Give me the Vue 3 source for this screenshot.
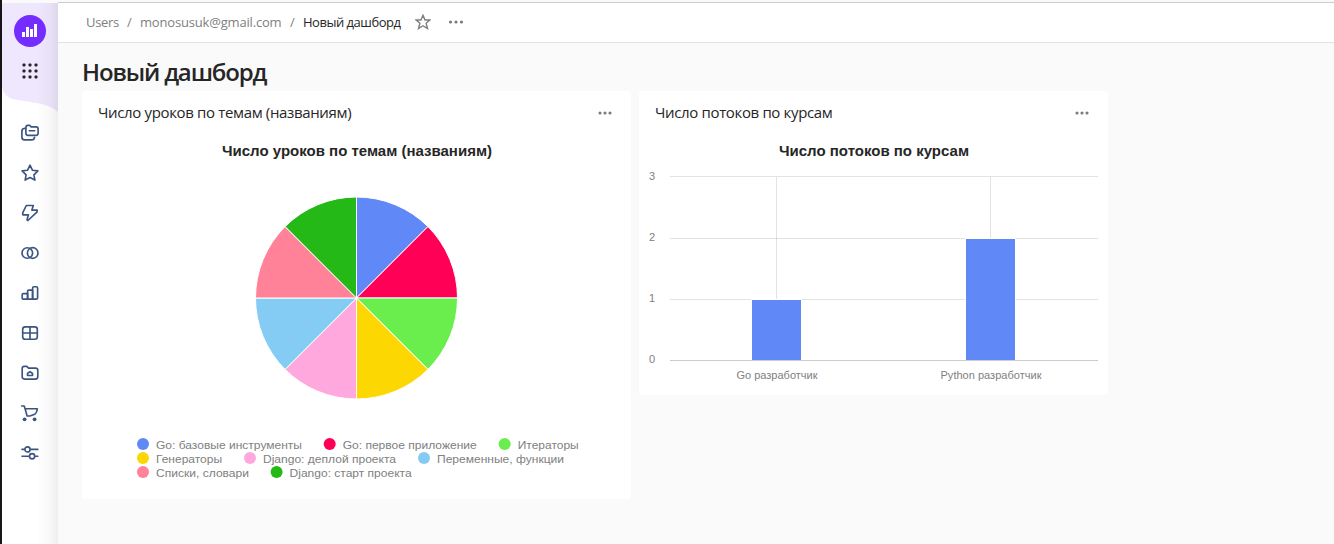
<script setup>
const icons = [
  { name: 'collections', d: ['M4.9 3.5Q4.9 1.3 6.8 1.3H8.6L10.1 2.900H15.2Q17.1 2.900 17.1 4.800V9.300Q17.1 11.300 15.2 11.300H6.900Q4.900 11.300 4.900 9.300Z', 'M4.700 4.300H3.600Q.900 4.600.900 7.200V13Q.900 15.900 3.500 15.900H10.700Q13.200 15.900 13.500 13.300', 'M8.300 6.700H13.700'] },
  { name: 'favorites', d: ['M9 1.200 11.400 6.200 16.900 6.900 12.900 10.800 13.900 16.100 9 13.600 4.100 16.100 5.100 10.800 1.100 6.900 6.600 6.200Z'] },
  { name: 'connections', d: ['M5.300 1.500H12.300L10.900 6.100H16.200L15.900 8.100 6.900 16.500 6 15.900 7.400 10.800H1.800L1.700 8.900Z'] },
  { name: 'datasets', d: ['M11.600 9A5.300 5.300 0 1 1 1 9A5.300 5.300 0 1 1 11.600 9Z', 'M17 9A5.300 5.300 0 1 1 6.400 9A5.300 5.300 0 1 1 17 9Z'] },
  { name: 'charts', d: ['M6.600 15.100H2.200Q1.200 15.100 1.200 14.100V10.600Q1.200 9.600 2.200 9.600H6.600Z', 'M6.600 15.100V7.300Q6.600 6.100 7.800 6.100H11.600V15.100Z', 'M11.600 15.100V4.100Q11.600 2.700 13 2.700H15.200Q16.600 2.700 16.600 4.100V13.700Q16.600 15.100 15.200 15.100Z'] },
  { name: 'dashboards', d: ['M4.200 2.800H13.800Q16.300 2.800 16.300 5.300V12.700Q16.300 15.200 13.800 15.200H4.200Q1.700 15.200 1.700 12.700V5.300Q1.700 2.800 4.200 2.800Z', 'M9 2.800V15.200M1.700 9H16.300'] },
  { name: 'folder', d: ['M1.200 4.300Q1.200 2.300 3.200 2.300H5.800L7.600 4.100H14.500Q16.800 4.100 16.800 6.400V12.500Q16.800 15.100 14.500 15.100H3.500Q1.200 15.100 1.200 12.800Z', 'M6.500 11.500V9.500L9 7.600 11.500 9.500V11.500Z'] },
  { name: 'marketplace', d: ['M.700 2H3.200L4.100 4.700 6.100 12H8.900L13.800 10.300Q16.200 8.200 16.300 4.700H4.300'], dots: [[3.6, 15.3], [13.6, 15.3]] },
  { name: 'settings', d: ['M1 5.400H3.900M9.100 5.400H16.800M9.100 5.400A2.600 2.600 0 1 1 3.900 5.400A2.600 2.600 0 1 1 9.100 5.400Z', 'M1 12.200H8.400M13.800 12.200H16.800M13.700 12.200A2.600 2.600 0 1 1 8.500 12.200A2.600 2.600 0 1 1 13.700 12.200Z'] }
]

const colors = ['#6188f7', '#ff0056', '#6aee4d', '#fcd702', '#ffa8dd', '#84ccf3', '#ff8299', '#24b916']
const slices = colors.map((color, i) => {
  const point = k => {
    const a = (k * Math.PI) / 4
    return `${274.5 + 101 * Math.sin(a)} ${165 - 101 * Math.cos(a)}`
  }
  return { color, d: `M274.5 165L${point(i)}A101 101 0 0 1 ${point(i + 1)}Z` }
})
const legend = [
  ['Go: базовые инструменты', 55, 0, 146],
  ['Go: первое приложение', 241.7, 0, 134],
  ['Итераторы', 416.7, 0, 61],
  ['Генераторы', 55, 1, 66],
  ['Django: деплой проекта', 162, 1, 133],
  ['Переменные, функции', 336, 1, 127],
  ['Списки, словари', 55, 2, 93],
  ['Django: старт проекта', 188.6, 2, 122]
].map(([text, x, row, width], i) => ({ text, x, y: 311 + row * 14, width, color: colors[i] }))
</script>

<template>
  <div class="window">
    <aside class="sidebar">
      <svg class="curve" width="56" height="112" viewBox="0 0 56 112">
        <path d="M0 0H56V109Q48 102 34 100L13 96.500Q0 94 0 81Z" fill="#eee7fd" />
      </svg>
      <div class="shade"></div>
      <div class="logo">
        <svg width="32" height="32" viewBox="0 0 32 32" fill="#fff">
          <rect x="8" y="17" width="3" height="5" /><rect x="12" y="12" width="3" height="10" />
          <rect x="16" y="14" width="3" height="8" /><rect x="20" y="9" width="3" height="13" />
        </svg>
      </div>
      <svg class="apps" width="18" height="18" viewBox="0 0 18 18" fill="#262226">
        <template v-for="r in 3" :key="r">
          <rect v-for="c in 3" :key="c" :x="c * 6 - 4.500" :y="r * 6 - 4.500" width="3" height="3" rx="1" />
        </template>
      </svg>
      <nav class="menu">
        <svg v-for="icon in icons" :key="icon.name" width="18" height="18" viewBox="0 0 18 18">
          <path v-for="d in icon.d" :key="d" :d="d" />
          <circle v-for="p in icon.dots" :key="p[0]" class="dot" :cx="p[0]" :cy="p[1]" r="1.900" />
        </svg>
      </nav>
    </aside>

    <main class="main">
      <header class="header">
        <span class="crumb users">Users</span><span class="crumb slash">/</span>
        <span class="crumb mail">monosusuk@gmail.com</span><span class="crumb slash">/</span>
        <span class="crumb current">Новый дашборд</span>
        <svg class="star" width="16" height="16" viewBox="0 0 16 16">
          <path d="M8 1.300 10 6H15L11.100 9.200 12.500 14.500 8 11.700 3.500 14.500 4.900 9.200 1 6H6Z" fill="none" stroke="#7f7f7f" stroke-width="1.400" />
        </svg>
        <svg class="more" width="16" height="4" viewBox="0 0 16 4" fill="#7b7b7b">
          <circle cx="2.500" cy="2" r="1.600" /><circle cx="8" cy="2" r="1.600" /><circle cx="13.500" cy="2" r="1.600" />
        </svg>
      </header>

      <h1 class="title">Новый дашборд</h1>

      <div class="cards">
        <section class="card lessons">
          <div class="card-head">
            <span class="name">Число уроков по темам (названиям)</span>
            <svg width="14" height="4" viewBox="0 0 14 4" fill="#7b7b7b">
              <circle cx="2" cy="2" r="1.550" /><circle cx="7" cy="2" r="1.550" /><circle cx="12" cy="2" r="1.550" />
            </svg>
          </div>
          <svg class="chart" width="549" height="366" viewBox="0 0 549 366">
            <text class="chart-title" x="140" y="23" textLength="270">Число уроков по темам (названиям)</text>
            <path v-for="s in slices" :key="s.color" :d="s.d" :fill="s.color" stroke="#fff" stroke-width="1" stroke-linejoin="round" />
            <g v-for="l in legend" :key="l.text">
              <circle :cx="l.x + 6" :cy="l.y" r="6" :fill="l.color" />
              <text class="legend-text" :x="l.x + 19" :y="l.y + 5" :textLength="l.width" lengthAdjust="spacingAndGlyphs">{{ l.text }}</text>
            </g>
          </svg>
        </section>

        <section class="card streams">
          <div class="card-head">
            <span class="name">Число потоков по курсам</span>
            <svg width="14" height="4" viewBox="0 0 14 4" fill="#7b7b7b">
              <circle cx="2" cy="2" r="1.550" /><circle cx="7" cy="2" r="1.550" /><circle cx="12" cy="2" r="1.550" />
            </svg>
          </div>
          <svg class="chart" width="469" height="262" viewBox="0 0 469 262">
            <text class="chart-title" x="140" y="23" textLength="190">Число потоков по курсам</text>
            <g stroke="#000" stroke-opacity=".11">
              <path d="M31 43.500H459M31 105.500H459M31 166.500H459" />
              <path d="M137.500 44V227M351.500 44V227" />
            </g>
            <rect x="112.500" y="166.500" width="50" height="61" fill="#6188f7" stroke="#fff" />
            <rect x="326.500" y="105.500" width="50" height="122" fill="#6188f7" stroke="#fff" />
            <path d="M31 227.500H459" stroke="#ccc" />
            <g class="axis">
              <text x="10" y="47">3</text><text x="10" y="108">2</text>
              <text x="10" y="169">1</text><text x="10" y="230">0</text>
              <text x="97.500" y="246" textLength="81">Go разработчик</text>
              <text x="301.500" y="246" textLength="101">Python разработчик</text>
            </g>
          </svg>
        </section>
      </div>
    </main>
  </div>
</template>

<style>
body { margin: 0; overflow: hidden; }
</style>

<style scoped>
.window {
  box-sizing: border-box;
  display: flex;
  height: 544px;
  border-left: 2px solid #171515;
  font-family: "Open Sans", "Noto Sans", sans-serif;
  background: #fafafa;
}
.sidebar {
  position: relative;
  box-sizing: border-box;
  display: flex;
  flex-direction: column;
  align-items: center;
  flex: 0 0 56px;
  margin-top: 3px;
  padding-top: 12px;
  background: #fff;
}
.curve { position: absolute; top: 0; left: 0; }
.shade {
  position: absolute;
  inset: 0 0 0 auto;
  width: 22px;
  background: linear-gradient(90deg, rgba(0, 0, 0, 0), rgba(0, 0, 0, .025) 60%, rgba(0, 0, 0, .065));
}
.logo {
  position: relative;
  width: 32px;
  height: 32px;
  border-radius: 50%;
  background: #752dff;
}
.logo svg { display: block; }
.apps { position: relative; margin-top: 15px; }
.menu {
  position: relative;
  display: flex;
  flex-direction: column;
  gap: 22px;
  margin-top: 44px;
}
.menu svg {
  display: block;
  overflow: visible;
  fill: none;
  stroke: #3c5480;
  stroke-width: 1.65;
  stroke-linejoin: round;
  stroke-linecap: round;
}
.menu .dot { fill: #3c5480; stroke: none; }
.main { flex: 1; padding-top: 2px; }
.header {
  box-sizing: border-box;
  display: flex;
  align-items: center;
  height: 41px;
  padding: 0 0 2px 28px;
  border-top: 1px solid #ccc;
  border-bottom: 1px solid #e2e2e2;
  background: #fff;
  font-size: 13px;
  color: #808080;
}
.crumb { display: block; white-space: nowrap; }
.users { width: 33px; letter-spacing: -.3px; }
.slash { width: 21px; text-align: center; }
.mail { width: 142px; letter-spacing: -.18px; }
.current { width: 98px; color: #262626; letter-spacing: -.48px; }
.star { margin-left: 14px; }
.more { margin-left: 17px; }
.title {
  margin: 12px 0 0 24px;
  height: 36px;
  font-size: 24px;
  line-height: 34px;
  font-weight: 600;
  letter-spacing: -1.15px;
  color: #262626;
  white-space: nowrap;
}
.cards { display: flex; align-items: flex-start; gap: 8px; padding-left: 24px; }
.card { border-radius: 3px; background: #fff; overflow: hidden; }
.lessons { width: 549px; height: 408px; }
.streams { width: 469px; height: 304px; }
.card-head {
  display: flex;
  align-items: center;
  justify-content: space-between;
  height: 42px;
  padding: 1px 19px 0 16px;
  box-sizing: border-box;
  font-size: 15px;
  letter-spacing: -.35px;
  color: #262626;
  white-space: nowrap;
}
.name { margin-top: -2px; }
.chart { display: block; font-family: "Liberation Sans", Arial, sans-serif; }
.chart-title { font-size: 15px; font-weight: 700; fill: #262626; }
.legend-text { font-size: 11.5px; fill: #808080; }
.axis { font-size: 11px; fill: #808080; }
</style>
